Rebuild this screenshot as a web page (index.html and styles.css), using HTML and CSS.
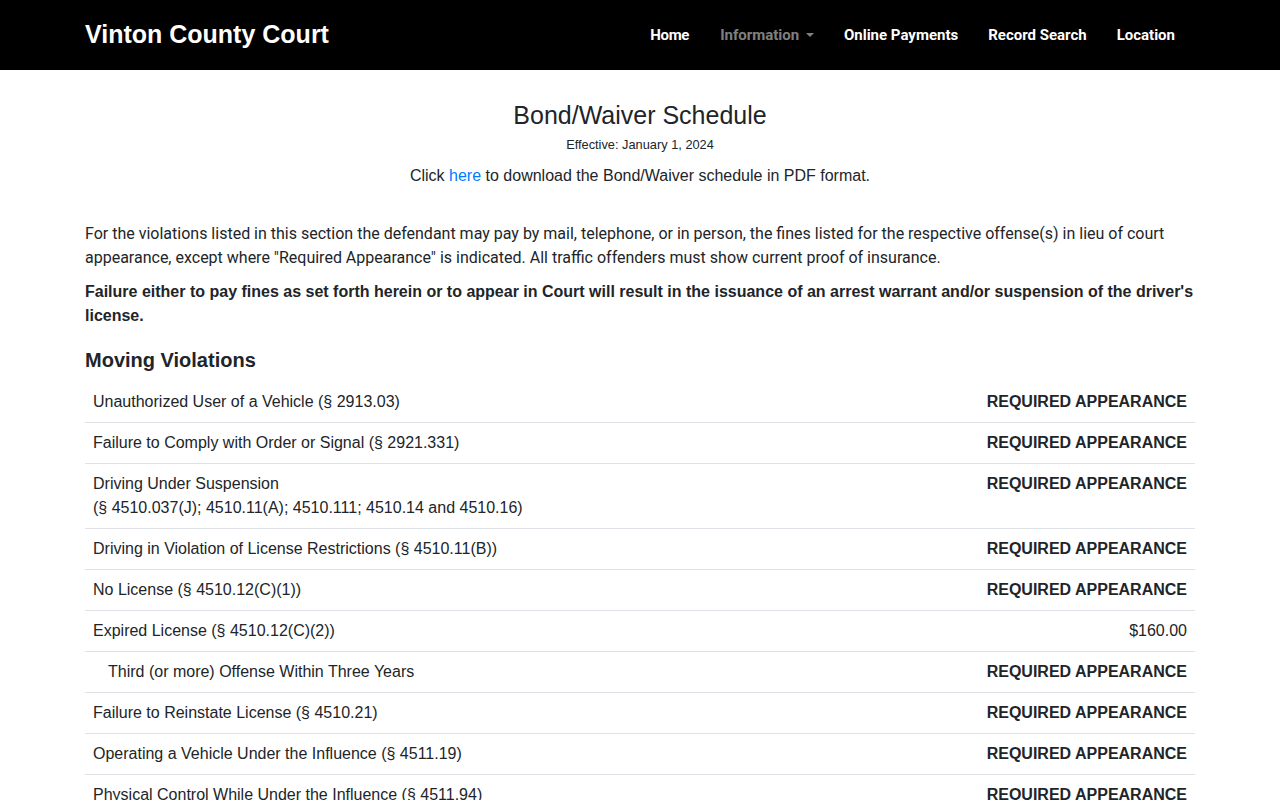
FILE: index.html
```html
<!DOCTYPE html>
<html lang="en">
<head>
<meta charset="utf-8">
<title>Bond/Waiver Schedule - Vinton County Court</title>
<link rel="stylesheet" href="styles.css">
</head>
<body>
<nav class="navbar">
  <div class="container nav-inner">
    <a class="brand" href="#">Vinton County Court</a>
    <ul class="nav-links">
      <li><a class="nav-link" href="#">Home</a></li>
      <li><a class="nav-link muted" href="#">Information <span class="caret"></span></a></li>
      <li><a class="nav-link" href="#">Online Payments</a></li>
      <li><a class="nav-link" href="#">Record Search</a></li>
      <li><a class="nav-link" href="#">Location</a></li>
    </ul>
  </div>
</nav>
<main class="container">
  <h3 class="title">Bond/Waiver Schedule</h3>
  <p class="effective">Effective: January 1, 2024</p>
  <p class="download">Click <a href="#">here</a> to download the Bond/Waiver schedule in PDF format.</p>
  <p class="intro">For the violations listed in this section the defendant may pay by mail, telephone, or in person, the fines listed for the respective offense(s) in lieu of court appearance, except where "Required Appearance" is indicated. All traffic offenders must show current proof of insurance.</p>
  <p class="intro bold">Failure either to pay fines as set forth herein or to appear in Court will result in the issuance of an arrest warrant and/or suspension of the driver's license.</p>
  <h5 class="section">Moving Violations</h5>
  <table class="fines">
    <tbody>
      <tr><td>Unauthorized User of a Vehicle (§ 2913.03)</td><td class="amt req">REQUIRED APPEARANCE</td></tr>
      <tr><td>Failure to Comply with Order or Signal (§ 2921.331)</td><td class="amt req">REQUIRED APPEARANCE</td></tr>
      <tr><td>Driving Under Suspension<br>(§ 4510.037(J); 4510.11(A); 4510.111; 4510.14 and 4510.16)</td><td class="amt req">REQUIRED APPEARANCE</td></tr>
      <tr><td>Driving in Violation of License Restrictions (§ 4510.11(B))</td><td class="amt req">REQUIRED APPEARANCE</td></tr>
      <tr><td>No License (§ 4510.12(C)(1))</td><td class="amt req">REQUIRED APPEARANCE</td></tr>
      <tr><td>Expired License (§ 4510.12(C)(2))</td><td class="amt">$160.00</td></tr>
      <tr><td class="sub">Third (or more) Offense Within Three Years</td><td class="amt req">REQUIRED APPEARANCE</td></tr>
      <tr><td>Failure to Reinstate License (§ 4510.21)</td><td class="amt req">REQUIRED APPEARANCE</td></tr>
      <tr><td>Operating a Vehicle Under the Influence (§ 4511.19)</td><td class="amt req">REQUIRED APPEARANCE</td></tr>
      <tr><td>Physical Control While Under the Influence (§ 4511.94)</td><td class="amt req">REQUIRED APPEARANCE</td></tr>
      <tr><td>Reckless Operation (§ 4511.20)</td><td class="amt req">REQUIRED APPEARANCE</td></tr>
    </tbody>
  </table>
</main>
</body>
</html>
```
FILE: styles.css
```css
* { box-sizing: border-box; }
html, body { margin: 0; padding: 0; }
body {
  font-family: "Liberation Sans", Arial, sans-serif;
  font-size: 16px;
  line-height: 1.5;
  color: #212529;
  background: #fff;
}
a { color: #007bff; text-decoration: none; }
.container { width: 1140px; margin: 0 auto; padding: 0 15px; }
.navbar { background: #000; height: 70px; }
.nav-inner { display: flex; align-items: center; justify-content: space-between; height: 70px; }
.brand { color: #fff; font-weight: bold; font-size: 25px; line-height: 1.5; }
.nav-links { list-style: none; margin: 0; padding: 1px 5px 0 0; display: flex; }
.nav-link {
  display: block;
  color: #fff;
  font-family: Roboto, "Liberation Sans", sans-serif;
  font-weight: bold;
  font-size: 15px;
  padding: 8px 15px;
}
.nav-links li:first-child .nav-link { padding-left: 16px; padding-right: 16px; letter-spacing: -0.3px; }
.nav-link.muted { color: rgba(255,255,255,0.5); }
.caret {
  display: inline-block;
  width: 0; height: 0;
  margin-left: 3px;
  vertical-align: 3px;
  border-top: 4px solid rgba(255,255,255,0.5);
  border-left: 4px solid transparent;
  border-right: 4px solid transparent;
}
.title { text-align: center; font-size: 25px; font-weight: normal; line-height: 1.2; margin: 30px 0 5px; }
.effective { text-align: center; font-size: 12.8px; margin: 0 0 10px; }
.download { text-align: center; margin: 0 0 34px; }
.intro { font-family: Roboto, "Liberation Sans", sans-serif; margin: 0 0 10px; }
.intro.bold { font-family: "Liberation Sans", Arial, sans-serif; font-weight: bold; }
.section { font-size: 20px; font-weight: bold; line-height: 1.2; margin: 20px 0 10px; }
.fines { width: 100%; border-collapse: collapse; }
.fines td { padding: 8px; vertical-align: top; border-bottom: 1px solid #dee2e6; }
.fines td.sub { padding-left: 23px; }
.amt { text-align: right; white-space: nowrap; }
.req { font-weight: bold; }
```
